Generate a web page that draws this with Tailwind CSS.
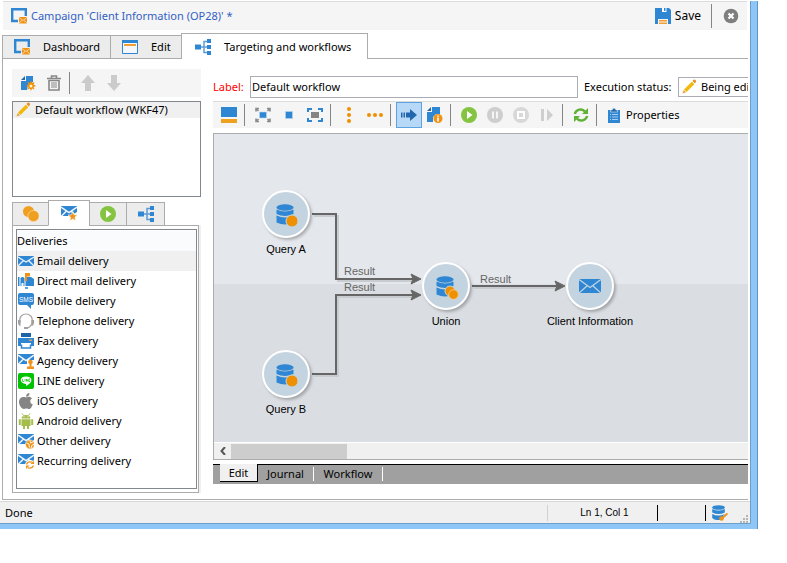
<!DOCTYPE html>
<html lang="en">

<head>
  <meta charset="UTF-8" />
  <title>Campaign - Client Information</title>
  <script src="https://cdn.jsdelivr.net/npm/@tailwindcss/browser@4"></script>
</head>

<body class="bg-white text-black text-[11px] leading-4 font-['Noto_Sans','Open_Sans',sans-serif]">

  <!-- Icon sprite -->
  <svg class="hidden">
    <symbol id="i-campaign" viewBox="0 0 16 16">
      <path d="M7 13H1.200V1.200H14.800V8" fill="none" stroke="#2f87d3" stroke-width="2.400" />
      <path d="M8 9h8v6.500H8z" fill="#ef9318" />
      <path d="M8 9.500l4 3 4-3M8 15l3-2.500M16 15l-3-2.500" fill="none" stroke="#fbe3bd" stroke-width=".8" />
    </symbol>
    <symbol id="i-edit" viewBox="0 0 16 16">
      <path d="M.5 1.500h15v13H.5z" fill="#f4f8fc" stroke="#2f87d3" />
      <path d="M0 1h16v3H0z" fill="#2f87d3" />
      <path d="M2 5h12v2H2z" fill="#f0a030" />
    </symbol>
    <symbol id="i-flow" viewBox="0 0 16 16">
      <path d="M0 5.500h6v5H0zM12 0h4v4h-4zM12 6h4v4h-4zM12 12h4v4h-4z" fill="#2f87d3" />
      <path d="M6 8h6M12 2.500H9v11h3" fill="none" stroke="#5c9cd6" stroke-width="1.500" />
    </symbol>
    <symbol id="i-save" viewBox="0 0 16 16">
      <path d="M0 0h14l2 2v14h-3v-5H3v5H0z" fill="#2f87d3" />
      <path d="M7 0h4.500v4H7z" fill="#fff" />
      <path d="M9 0h1.500v3H9z" fill="#2f87d3" />
      <path d="M4 12h8v1.500H4zM4 14.500h8V16H4z" fill="#f0a030" />
    </symbol>
    <symbol id="i-close" viewBox="0 0 16 16">
      <circle cx="8" cy="8" r="7.300" fill="#7f7f7f" />
      <path d="M5.500 5.500l5 5M10.500 5.500l-5 5" stroke="#fff" stroke-width="2.200" />
    </symbol>
    <symbol id="i-new" viewBox="0 0 16 16">
      <path d="M6 1h7v6l-2 1-3 2-1 5H1V6h5z" fill="#2f87d3" />
      <path d="M1 5l4-4v4z" fill="#1e68ad" />
      <path d="M11 5.500l1 2.500 2.500-1-1 2.500 2.500 1.500-2.500 1 1 2.500-2.500-1L11 16l-1-2.500-2.500 1 1-2.500L6 11l2.500-1.500-1-2.500L10 8z" fill="#ef9000" />
      <circle cx="11" cy="11" r="1.500" fill="#fff3da" />
    </symbol>
    <symbol id="i-trash" viewBox="0 0 16 16">
      <path d="M5.500 3V1h5v2M1 3.500h14" fill="none" stroke="#878787" stroke-width="1.600" />
      <path d="M3 5.500h10V15H3z" fill="none" stroke="#878787" stroke-width="1.600" />
      <path d="M6 7v6M8 7v6M10 7v6" stroke="#878787" />
    </symbol>
    <symbol id="i-up" viewBox="0 0 16 16">
      <path d="M8 0l7 8h-4v8H5V8H1z" fill="#cbcbcb" />
    </symbol>
    <symbol id="i-pencil" viewBox="0 0 16 16">
      <path d="M3 10.500l7.800-7.800 2.500 2.500-7.800 7.800z" fill="#f2b80c" />
      <path d="M11.500 2l1.200-1.200q1-.6 1.800.3t.4 1.800L13.900 4.500z" fill="#ee8b22" />
      <path d="M1.500 14.500l1.200-3.500 2.300 2.300z" fill="#e3a23b" />
    </symbol>
    <symbol id="i-panel" viewBox="0 0 16 16">
      <path d="M0 0h16v10H0z" fill="#2f87d3" />
      <path d="M0 12h16v4H0z" fill="#f0a020" />
    </symbol>
    <symbol id="i-fit" viewBox="0 0 16 16">
      <path d="M4.500 5h7v6h-7z" fill="#2f87d3" stroke="#b7d6f0" stroke-width=".6" />
      <path d="M1 4.500V1.500h3M1 1.500l2.500 2.500M15 4.500V1.500h-3M15 1.500l-2.500 2.500M1 11.500v3h3M1 14.500l2.500-2.500M15 11.500v3h-3M15 14.500l-2.500-2.500" fill="none" stroke="#8b8b8b" stroke-width="1.600" />
    </symbol>
    <symbol id="i-actual" viewBox="0 0 16 16">
      <path d="M4.500 4.500h7v7h-7z" fill="#2f87d3" stroke="#b7d6f0" stroke-width=".6" />
    </symbol>
    <symbol id="i-zoomsel" viewBox="0 0 16 16">
      <path d="M4 5h8v6H4z" fill="#848484" />
      <path d="M1 5V2h4M11 2h4v3M1 11v3h4M15 11v3h-4" fill="none" stroke="#2f87d3" stroke-width="2" />
    </symbol>
    <symbol id="i-dots" viewBox="0 0 16 16">
      <circle cx="2" cy="8" r="2" fill="#ef9000" />
      <circle cx="8" cy="8" r="2" fill="#ef9000" />
      <circle cx="14" cy="8" r="2" fill="#ef9000" />
    </symbol>
    <symbol id="i-arrow" viewBox="0 0 16 16">
      <path d="M0 5.500h1.500v5H0zM2.500 5.500H4v5H2.500zM5 5.500h4V2l7 6-7 6v-3.500H5z" fill="#2067ae" />
    </symbol>
    <symbol id="i-info" viewBox="0 0 16 16">
      <path d="M5 0h8v7H9l-3 3v5H0V5h5z" fill="#2f87d3" />
      <path d="M0 4l4-4v4z" fill="#1e68ad" />
      <circle cx="11" cy="11.500" r="4.500" fill="#ef9318" />
      <path d="M10.200 8.500h1.600v1.200h-1.600zM10.200 10.500h1.600v4h-1.600z" fill="#fff" />
    </symbol>
    <symbol id="i-play" viewBox="0 0 16 16">
      <circle cx="8" cy="8" r="8" fill="#85c440" />
      <path d="M6 4l5.500 4L6 12z" fill="#fff" />
    </symbol>
    <symbol id="i-pause" viewBox="0 0 16 16">
      <circle cx="8" cy="8" r="8" fill="#cecece" />
      <path d="M6 4.500v7M10 4.500v7" stroke="#f5f5f5" stroke-width="2" />
    </symbol>
    <symbol id="i-stop" viewBox="0 0 16 16">
      <circle cx="8" cy="8" r="8" fill="#d8d8d8" />
      <path d="M5 5h6v6H5z" fill="none" stroke="#fff" stroke-width="2" />
    </symbol>
    <symbol id="i-step" viewBox="0 0 16 16">
      <path d="M2 2h3v12H2zM8 2l6 6-6 6z" fill="#cecece" />
    </symbol>
    <symbol id="i-refresh" viewBox="0 0 16 16">
      <path d="M1.800 7C3 2.500 9 .8 12 4.500M14.200 9C13 13.500 7 15.200 4 11.500" fill="none" stroke="#5fb233" stroke-width="2.400" />
      <path d="M15 1v6H9zM1 15V9h6z" fill="#5fb233" />
    </symbol>
    <symbol id="i-props" viewBox="0 0 16 16">
      <path d="M2 3h12v13H2z" fill="#2f87d3" />
      <path d="M4.500 5V3H6q2-3.800 4 0h1.500v2z" fill="#1e68ad" stroke="#dbe9f6" stroke-width=".6" />
      <path d="M4 7.500h1M6 7.500h6M4 10h1M6 10h6M4 12.500h1M6 12.500h6" stroke="#a9cdee" />
    </symbol>
    <symbol id="i-coins" viewBox="0 0 16 16">
      <circle cx="5.500" cy="5.500" r="5.500" fill="#efa020" />
      <circle cx="10.500" cy="10" r="5.600" fill="#efa020" stroke="#fbe2b5" stroke-width=".6" />
    </symbol>
    <symbol id="i-mail" viewBox="0 0 16 12">
      <path d="M0 1h16v10H0z" fill="#2f87d3" />
      <path d="M0 2l8 5 8-5M0 11l5.500-5.500M16 11l-5.500-5.500" fill="none" stroke="#e9f2fa" stroke-width="1.300" />
    </symbol>
    <symbol id="i-mailcut" viewBox="0 0 16 16">
      <path d="M0 1h16v6l-6 4H0z" fill="#2f87d3" />
      <path d="M0 2l8 5.500L16 2M0 11.500l5.500-5.500M10 6l3.500 3.500" fill="none" stroke="#f0f6fb" stroke-width="1.500" />
    </symbol>
    <symbol id="i-mailstar" viewBox="0 0 16 16">
      <use href="#i-mailcut" />
      <path d="M11.800 6.500l1.300 3.300 3.400.2-2.600 2.200.9 3.600-3-1.900-3 1.900.9-3.600L7 10l3.500-.2z" fill="#ef9318" stroke="#fff" stroke-width=".6" />
    </symbol>
    <symbol id="i-direct" viewBox="0 0 16 16">
      <path d="M0 4h1.500v9H0zM2.500 13V5q2-2 4 0v8zM7.500 13V4H13l3 2v7z" fill="#2f87d3" />
      <path d="M3.500 10h2v3h-2z" fill="#fff" />
      <path d="M7 14h3v2H7z" fill="#5da3df" />
      <path d="M7 0h5v3.500H9V8H7z" fill="#ef9318" />
    </symbol>
    <symbol id="i-sms" viewBox="0 0 16 16">
      <path d="M2 0h12q2 0 2 2v8q0 2-2 2h-1v4l-4-4H2q-2 0-2-2V2q0-2 2-2z" fill="#2f87d3" />
      <text x="8" y="8.500" font-size="6.500" text-anchor="middle" fill="#fff" font-family="Liberation Sans">SMS</text>
    </symbol>
    <symbol id="i-phone" viewBox="0 0 16 16">
      <path d="M2 10C-1-2 17-2 14 10q-1 4-5 5" fill="none" stroke="#a9a9a9" stroke-width="1.200" />
      <path d="M0 7h2.500v6H2Q0 12 0 10zM16 7h-2.500v6h.5q2-1 2-3zM6 14h4v2H6z" fill="#a0a0a0" />
    </symbol>
    <symbol id="i-fax" viewBox="0 0 16 16">
      <path d="M3 0h10v4H3z" fill="#1e62a8" />
      <path d="M0 5h16v8h-3v-3H3v3H0z" fill="#2f87d3" />
      <path d="M4 10h8v5H4z" fill="#fff" />
      <path d="M3.500 11.500V15h9v-3.500" fill="none" stroke="#2f87d3" stroke-width="1.500" />
      <path d="M11 6.500h3V8h-3z" fill="#d5a050" />
    </symbol>
    <symbol id="i-agency" viewBox="0 0 16 16">
      <use href="#i-mailcut" />
      <path d="M9 7h7v9H9z" fill="#fff" />
      <circle cx="12.500" cy="9" r="2.300" fill="#ef9318" />
      <path d="M11.500 11h2v2.500H16V16H9v-2.500h2.500z" fill="#ef9318" />
    </symbol>
    <symbol id="i-line" viewBox="0 0 16 16">
      <rect width="16" height="16" rx="2" fill="#00c300" />
      <path d="M8 3.500c7 0 7.500 6 0 9.500v-2C1 10.500 1 3.500 8 3.500z" fill="#fff" />
      <path d="M4.500 6v2.500H6M7 6v2.500M8.500 8.500V6l1.500 2.500V6M12 6h-1v2.500h1" fill="none" stroke="#00c300" stroke-width=".7" />
    </symbol>
    <symbol id="i-ios" viewBox="0 0 16 16">
      <path d="M8 4.500c2-1 4.500-1.200 6 1-2.800 1.800-2 5 .8 6-1.300 3-2.800 5.500-5 4.300-1.200-.5-1.800-.5-3 0C4 17 1 12 1 9c0-4 3.500-6 7-4.500z" fill="#858585" />
      <path d="M8 3.800C8 1.500 9.500.2 11.500 0c.2 2-1.500 3.800-3.500 3.800z" fill="#858585" />
    </symbol>
    <symbol id="i-android" viewBox="0 0 16 16">
      <path d="M3.500 5.500q.3-3.500 4.500-3.500t4.500 3.500zM3.500 6.300h9V13H11v3H9v-3H7v3H5v-3H3.500zM.8 6.300h2V12h-2zM13.200 6.300h2V12h-2z" fill="#a4bd4c" />
      <path d="M4 .5l1.500 2M12 .5l-1.500 2" stroke="#a4bd4c" />
      <path d="M5.500 3.800h1M9.500 3.800h1" stroke="#fff" />
    </symbol>
    <symbol id="i-other" viewBox="0 0 16 16">
      <use href="#i-mailcut" />
      <circle cx="12" cy="11.500" r="4.500" fill="#ef9318" stroke="#fff" stroke-width=".6" />
      <path d="M8.500 10l2.500 1 .5 3.500M12 7.500l.5 2.500 2.500-1M13 15.500l1-3.500 2-.5" fill="none" stroke="#fff" stroke-width=".9" />
    </symbol>
    <symbol id="i-recurring" viewBox="0 0 16 16">
      <use href="#i-mailcut" />
      <circle cx="12" cy="12" r="5" fill="#fff" />
      <path d="M8.500 11.500q1-3.500 5.500-2.300M15.500 12.500q-1 3.500-5.500 2.300" fill="none" stroke="#ef9318" stroke-width="1.300" />
      <path d="M16 7.500V11h-3.500zM8 16v-3.500h3.500z" fill="#ef9318" />
    </symbol>
    <symbol id="i-db" viewBox="0 0 18 21">
      <ellipse cx="9" cy="3.500" rx="8.500" ry="3.300" fill="#2f87d3" />
      <path d="M.5 5.500q8.500 4 17 0v4.500q-8.500 4-17 0zM.5 11.500q8.500 4 17 0v7q-8.500 4-17 0z" fill="#2f87d3" />
    </symbol>
    <symbol id="i-dbkey" viewBox="0 0 16 16">
      <ellipse cx="6.500" cy="2.500" rx="6.300" ry="2.300" fill="#2f87d3" />
      <path d="M.2 4q6.300 3 12.600 0v3.500q-6.300 3-12.600 0zM.2 9q6.300 3 12.600 0L8 15H5q-3 0-4.800-2z" fill="#2f87d3" />
      <path d="M15.500 8.500l-5.500 5" stroke="#ef9318" stroke-width="1.800" />
      <circle cx="9.500" cy="13.500" r="2.300" fill="#ef9318" />
    </symbol>
    <symbol id="i-query" viewBox="0 0 24 24">
      <use href="#i-db" width="18" height="21" />
      <circle cx="16" cy="17" r="6" fill="#ef9000" stroke="#c3d4e0" />
    </symbol>
    <symbol id="i-union" viewBox="0 0 24 24">
      <use href="#i-db" width="18" height="21" />
      <circle cx="14" cy="15" r="5" fill="#ef9000" stroke="#c3d4e0" />
      <circle cx="17.500" cy="18.500" r="4.800" fill="#ef9000" stroke="#f8cf8e" stroke-width=".8" />
    </symbol>
  </svg>

  <!-- Application window -->
  <div class="mr-[30px] border-r-6 border-b-5 border-[#8dc6f7] shadow-[1px_0_0_#6095c5]">
    <div class="border-r border-b border-[#6e9fc9]">

      <!-- Title bar -->
      <header class="ml-[3px] mr-[3px] mt-px h-[29px] flex items-center bg-[#f5f5f5] border-t border-[#dcdcdc] text-[12px]">
        <svg class="ml-2 size-4"><use href="#i-campaign" /></svg>
        <h1 class="ml-1 flex-1 text-[11px] text-[#3360c4]">Campaign 'Client Information (OP28)' *</h1>
        <button class="flex items-center gap-1 pr-2.5"><svg class="size-4"><use href="#i-save" /></svg>Save</button>
        <span class="w-px h-6 bg-[#858585]"></span>
        <button class="ml-[11px] mr-2" aria-label="Close"><svg class="size-4"><use href="#i-close" /></svg></button>
      </header>

      <!-- Main tabs -->
      <nav class="ml-0.5 mr-0.5 mt-[3px] h-[26px] flex items-end border-b border-[#acacac]">
        <button class="h-[23px] w-[109px] flex items-center gap-[13px] pl-[11px] bg-[#ececec] border border-b-0 border-[#acacac]">
          <svg class="size-4"><use href="#i-campaign" /></svg>Dashboard
        </button>
        <button class="h-[23px] w-[71px] flex items-center gap-[13px] pl-[11px] bg-[#ececec] border border-b-0 border-l-0 border-[#acacac]">
          <svg class="size-4"><use href="#i-edit" /></svg>Edit
        </button>
        <button class="-mb-px -ml-px h-[26px] w-[187px] flex items-center gap-[13px] pl-[13px] bg-white border border-b-0 border-[#acacac]">
          <svg class="size-4"><use href="#i-flow" /></svg>Targeting and workflows
        </button>
      </nav>

      <main class="ml-0.5 mr-0.5 h-[441px] flex gap-3 border-l border-b border-[#acacac]">

        <!-- Workflow list and palette -->
        <aside class="w-[189px] ml-[9px] pt-2.5 shrink-0">
          <div class="h-7 px-[3px] flex items-center bg-[#f5f5f5]">
            <button class="w-[26px] flex justify-center" aria-label="New"><svg class="size-4"><use href="#i-new" /></svg></button>
            <button class="w-[26px] flex justify-center" aria-label="Delete"><svg class="size-4"><use href="#i-trash" /></svg></button>
            <span class="w-2 pl-0.5"><span class="block w-px h-[22px] bg-[#858585]"></span></span>
            <button class="w-[26px] flex justify-center" aria-label="Move up"><svg class="size-4"><use href="#i-up" /></svg></button>
            <button class="w-[26px] flex justify-center" aria-label="Move down"><svg class="size-4 rotate-180"><use href="#i-up" /></svg></button>
          </div>
          <div class="mt-1 h-24 border border-[#828790]">
            <button class="w-full h-4 flex items-center gap-1 pl-0.5 bg-[#f0f0f0]">
              <svg class="size-4"><use href="#i-pencil" /></svg>Default workflow (WKF47)
            </button>
          </div>

          <div class="mt-[3px] h-[26px] flex items-end relative z-10">
            <button class="h-6 w-[37px] flex justify-center items-center bg-[#ececec] border border-[#acacac]" aria-label="Targeting"><svg class="size-4"><use href="#i-coins" /></svg></button>
            <button class="-mx-px h-[26px] w-[42px] flex justify-center items-center bg-white border border-b-white border-[#acacac]" aria-label="Deliveries"><svg class="size-4"><use href="#i-mailstar" /></svg></button>
            <button class="h-6 w-[38px] flex justify-center items-center bg-[#ececec] border border-[#acacac]" aria-label="Actions"><svg class="size-4"><use href="#i-play" /></svg></button>
            <button class="-ml-px h-6 w-[39px] flex justify-center items-center bg-[#ececec] border border-[#acacac]" aria-label="Flow"><svg class="size-4"><use href="#i-flow" /></svg></button>
          </div>
          <div class="-mt-px mr-0.5 h-[268px] p-[3px] pr-px border border-[#acacac] shadow-[2px_0_0_#f0f0f0]">
            <div class="h-full pt-px border border-[#828790]">
              <h2 class="h-5 leading-5 bg-[#fafbfd]">Deliveries</h2>
              <ul>
                <li><button class="w-full h-5 flex items-center gap-[3px] pl-px bg-[#f0f0f0]"><svg class="w-4 h-3"><use href="#i-mail" /></svg>Email delivery</button></li>
                <li><button class="w-full h-5 flex items-center gap-[3px] pl-px"><svg class="size-4"><use href="#i-direct" /></svg>Direct mail delivery</button></li>
                <li><button class="w-full h-5 flex items-center gap-[3px] pl-px"><svg class="size-4"><use href="#i-sms" /></svg>Mobile delivery</button></li>
                <li><button class="w-full h-5 flex items-center gap-[3px] pl-px"><svg class="size-4"><use href="#i-phone" /></svg>Telephone delivery</button></li>
                <li><button class="w-full h-5 flex items-center gap-[3px] pl-px"><svg class="size-4"><use href="#i-fax" /></svg>Fax delivery</button></li>
                <li><button class="w-full h-5 flex items-center gap-[3px] pl-px"><svg class="size-4"><use href="#i-agency" /></svg>Agency delivery</button></li>
                <li><button class="w-full h-5 flex items-center gap-[3px] pl-px"><svg class="size-4"><use href="#i-line" /></svg>LINE delivery</button></li>
                <li><button class="w-full h-5 flex items-center gap-[3px] pl-px"><svg class="size-4"><use href="#i-ios" /></svg>iOS delivery</button></li>
                <li><button class="w-full h-5 flex items-center gap-[3px] pl-px"><svg class="size-4"><use href="#i-android" /></svg>Android delivery</button></li>
                <li><button class="w-full h-5 flex items-center gap-[3px] pl-px"><svg class="size-4"><use href="#i-other" /></svg>Other delivery</button></li>
                <li><button class="w-full h-5 flex items-center gap-[3px] pl-px"><svg class="size-4"><use href="#i-recurring" /></svg>Recurring delivery</button></li>
              </ul>
            </div>
          </div>
        </aside>

        <!-- Workflow editor -->
        <section class="flex-1 min-w-0 pt-[17px]">
          <div class="flex items-center h-[22px]">
            <label for="label" class="w-[37px] shrink-0 text-[#f00]">Label:</label>
            <input id="label" type="text" value="Default workflow" class="flex-1 min-w-0 h-[22px] px-px pb-0.5 border border-[#acacb4]" />
            <label for="status" class="w-[100px] pl-1.5 shrink-0 whitespace-nowrap">Execution status:</label>
            <div class="relative w-[70px] shrink-0 overflow-hidden">
              <select id="status" class="block w-40 h-5 pl-[22px] appearance-none bg-white border border-[#acacb4]">
                <option>Being edited</option>
              </select>
              <svg class="absolute left-[3px] top-0.5 size-4"><use href="#i-pencil" /></svg>
            </div>
          </div>

          <div class="mt-[3px] h-[27px] pl-[3px] flex items-center bg-[#f5f5f5] border-t border-[#dcdcdc]">
            <button class="w-[26px] flex justify-center" aria-label="Toggle panel"><svg class="size-4"><use href="#i-panel" /></svg></button>
            <span class="w-2 pl-0.5"><span class="block w-px h-[22px] bg-[#858585]"></span></span>
            <button class="w-[26px] flex justify-center" aria-label="Zoom to fit"><svg class="size-4"><use href="#i-fit" /></svg></button>
            <button class="w-[26px] flex justify-center" aria-label="Actual size"><svg class="size-4"><use href="#i-actual" /></svg></button>
            <button class="w-[26px] flex justify-center" aria-label="Zoom to selection"><svg class="size-4"><use href="#i-zoomsel" /></svg></button>
            <span class="w-2 pl-0.5"><span class="block w-px h-[22px] bg-[#858585]"></span></span>
            <button class="w-[26px] flex justify-center" aria-label="Align vertically"><svg class="size-4 rotate-90"><use href="#i-dots" /></svg></button>
            <button class="w-[26px] flex justify-center" aria-label="Align horizontally"><svg class="size-4"><use href="#i-dots" /></svg></button>
            <span class="w-2 pl-0.5"><span class="block w-px h-[22px] bg-[#858585]"></span></span>
            <button class="w-[26px] h-[26px] flex justify-center items-center bg-[#b8d8f8] border border-[#5fa2e2]" aria-label="Progress"><svg class="size-4 shrink-0"><use href="#i-arrow" /></svg></button>
            <button class="w-[26px] flex justify-center" aria-label="Log"><svg class="size-4"><use href="#i-info" /></svg></button>
            <span class="w-2 pl-0.5"><span class="block w-px h-[22px] bg-[#858585]"></span></span>
            <button class="w-[26px] flex justify-center" aria-label="Start"><svg class="size-4"><use href="#i-play" /></svg></button>
            <button class="w-[26px] flex justify-center" aria-label="Pause"><svg class="size-4"><use href="#i-pause" /></svg></button>
            <button class="w-[26px] flex justify-center" aria-label="Stop"><svg class="size-4"><use href="#i-stop" /></svg></button>
            <button class="w-[26px] flex justify-center" aria-label="Step"><svg class="size-4"><use href="#i-step" /></svg></button>
            <span class="w-2 pl-0.5"><span class="block w-px h-[22px] bg-[#858585]"></span></span>
            <button class="w-[26px] flex justify-center" aria-label="Refresh"><svg class="size-4"><use href="#i-refresh" /></svg></button>
            <span class="w-2 pl-0.5"><span class="block w-px h-[22px] bg-[#858585]"></span></span>
            <button class="flex items-center gap-1 pl-1"><svg class="size-4"><use href="#i-props" /></svg>Properties</button>
          </div>

          <!-- Canvas -->
          <div class="mt-[5px] border-t border-l border-b border-[#acacac]">
            <div class="relative h-[308px] overflow-hidden bg-[#dadde2] text-[11px] leading-4 font-['Liberation_Sans',sans-serif]">
              <div class="h-[150px] bg-[#e4e7ec]"></div>
              <svg class="absolute left-0 top-0 w-[534px] h-[308px]">
                <g fill="none" stroke="#c8cbd0" stroke-width="2">
                  <path d="M100 82H124V147H200M100 242H124V163H200M260 154H344" />
                </g>
                <g fill="none" stroke="#666" stroke-width="2">
                  <path d="M98 80H122V145H200M98 240H122V161H200M258 152H344" />
                </g>
                <path d="M197 140l10 5-10 5 2-5zM197 156l10 5-10 5 2-5zM341 147l10 5-10 5 2-5z" fill="#666" stroke="#666" />
              </svg>
              <span class="absolute left-[130px] top-[129px] text-[#666]">Result</span>
              <span class="absolute left-[130px] top-[145px] text-[#666]">Result</span>
              <span class="absolute left-[266px] top-[137px] text-[#666]">Result</span>
              <button class="absolute left-[22px] top-14 w-[100px] flex flex-col items-center gap-[3px]">
                <span class="size-12 pl-[3px] pt-[3px] flex items-center justify-center rounded-full bg-[#c3d4e0] border-2 border-white shadow-[2px_2px_3px_#00000040]"><svg class="size-6"><use href="#i-query" /></svg></span>Query A
              </button>
              <button class="absolute left-[22px] top-[216px] w-[100px] flex flex-col items-center gap-[3px]">
                <span class="size-12 pl-[3px] pt-[3px] flex items-center justify-center rounded-full bg-[#c3d4e0] border-2 border-white shadow-[2px_2px_3px_#00000040]"><svg class="size-6"><use href="#i-query" /></svg></span>Query B
              </button>
              <button class="absolute left-[182px] top-32 w-[100px] flex flex-col items-center gap-[3px]">
                <span class="size-12 pl-[3px] pt-[3px] flex items-center justify-center rounded-full bg-[#c3d4e0] border-2 border-white shadow-[2px_2px_3px_#00000040]"><svg class="size-6"><use href="#i-union" /></svg></span>Union
              </button>
              <button class="absolute left-[326px] top-32 w-[100px] flex flex-col items-center gap-[3px]">
                <span class="size-12 flex items-center justify-center rounded-full bg-[#c3d4e0] border-2 border-white shadow-[2px_2px_3px_#00000040]"><svg class="w-[22px] h-[14px]" viewBox="0 0 22 14"><path d="M0 0h22v14H0z" fill="#2f87d3" /><path d="M0 .5l11 8 11-8M0 14l8-7M22 14l-8-7" fill="none" stroke="#c3d4e0" stroke-width="1.300" /></svg></span>Client Information
              </button>
            </div>
            <div class="h-[17px] flex items-center bg-[#f0f0f0] border-t border-white">
              <button class="w-[17px] flex justify-center" aria-label="Scroll left"><svg class="size-2" viewBox="0 0 8 8"><path d="M6 0L2.500 4 6 8" fill="none" stroke="#555" stroke-width="2" /></svg></button>
              <span class="w-[116px] h-[15px] bg-[#cdcdcd]"></span>
            </div>
          </div>

          <!-- View tabs -->
          <nav class="mt-1 h-5 pl-[7px] flex items-start bg-[#a0a0a0] border-t border-black text-[12px]">
            <button class="-mt-px h-[18px] w-[38px] bg-[#f0f0f0] border-r border-b border-black text-[11px]">Edit</button>
            <button class="h-[17px] w-[55px] text-[11px]">Journal</button>
            <span class="mt-0.5 w-px h-3.5 bg-white"></span>
            <button class="h-[17px] w-17 text-[11px]">Workflow</button>
            <span class="mt-0.5 w-px h-3.5 bg-white"></span>
          </nav>
        </section>
      </main>

      <!-- Status bar -->
      <footer class="mt-px h-[22px] flex items-center bg-[#f0f0f0] border-t border-[#d7d7d7]">
        <span class="flex-1 pl-[5px]">Done</span>
        <span class="w-[111px] h-4 pl-1 border-l border-[#d0d0d0] border-r border-r-black text-center text-[10px] font-['Liberation_Sans',sans-serif]">Ln 1, Col 1</span>
        <span class="w-12 h-4 border-r border-black"></span>
        <svg class="ml-1.5 size-4"><use href="#i-dbkey" /></svg>
        <svg class="ml-3 mr-0.5 mt-3 size-2" viewBox="0 0 8 8"><path d="M6 0h2v2H6zM3 3h2v2H3zM6 3h2v2H6zM0 6h2v2H0zM3 6h2v2H3zM6 6h2v2H6z" fill="#b5b5b5" /></svg>
      </footer>
    </div>
  </div>
</body>

</html>
